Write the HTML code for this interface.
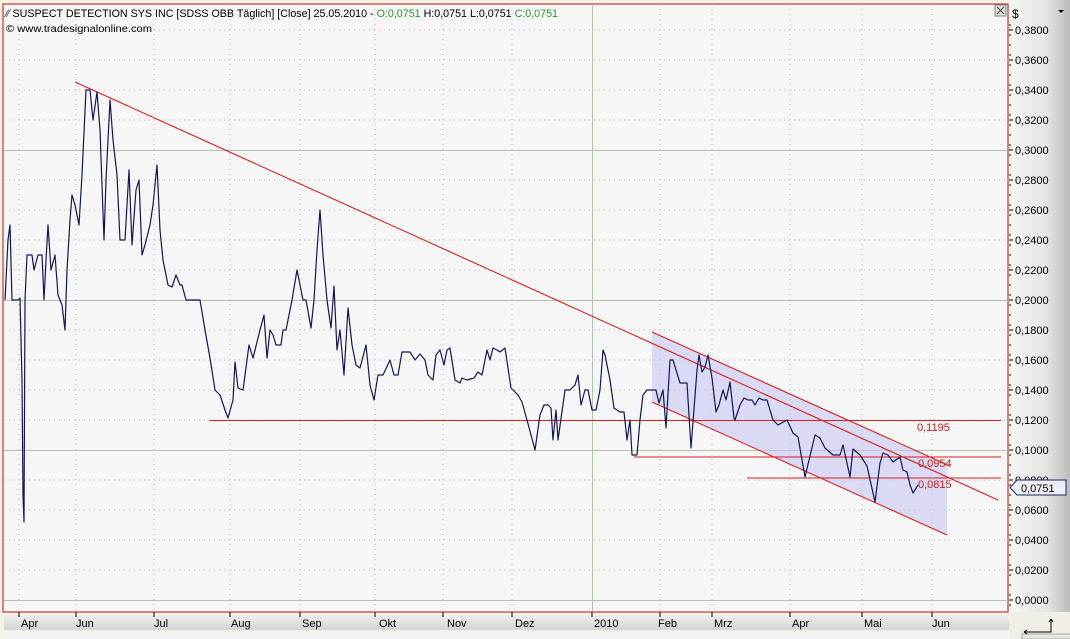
<!DOCTYPE html>
<html><head><meta charset="utf-8"><style>
html,body{margin:0;padding:0;background:#f4f1e6;}
svg{display:block;font-family:"Liberation Sans",sans-serif;}
</style></head><body>
<svg width="1070" height="639" viewBox="0 0 1070 639" xmlns="http://www.w3.org/2000/svg">
<defs>
<linearGradient id="ga" x1="0" x2="1" y1="0" y2="0"><stop offset="0" stop-color="#f6f6f4"/><stop offset="0.6" stop-color="#e6e6e4"/><stop offset="1" stop-color="#bcbcba"/></linearGradient>
<linearGradient id="gb" x1="0" x2="0" y1="0" y2="1"><stop offset="0" stop-color="#f4f4f2"/><stop offset="1" stop-color="#d4d4d2"/></linearGradient>
</defs>
<rect x="0" y="0" width="1070" height="639" fill="#f4f1e6"/>
<rect x="1009" y="0" width="61" height="612" fill="url(#ga)"/>
<rect x="4" y="612" width="1005" height="18" fill="url(#gb)"/>
<rect x="1009" y="612" width="61" height="27" fill="#f0eee6"/>
<rect x="3" y="4" width="1005" height="608" fill="#f6f6f6" stroke="#c0392b" stroke-width="1.2"/>
<g stroke="#b8b8b8" stroke-width="1" stroke-dasharray="1,4">
<line x1="4" x2="1008" y1="30" y2="30"/><line x1="4" x2="1008" y1="60" y2="60"/><line x1="4" x2="1008" y1="90" y2="90"/><line x1="4" x2="1008" y1="120" y2="120"/><line x1="4" x2="1008" y1="180" y2="180"/><line x1="4" x2="1008" y1="210" y2="210"/><line x1="4" x2="1008" y1="240" y2="240"/><line x1="4" x2="1008" y1="270" y2="270"/><line x1="4" x2="1008" y1="330" y2="330"/><line x1="4" x2="1008" y1="360" y2="360"/><line x1="4" x2="1008" y1="390" y2="390"/><line x1="4" x2="1008" y1="420" y2="420"/><line x1="4" x2="1008" y1="480" y2="480"/><line x1="4" x2="1008" y1="510" y2="510"/><line x1="4" x2="1008" y1="540" y2="540"/><line x1="4" x2="1008" y1="570" y2="570"/>
<line x1="19" x2="19" y1="4" y2="611"/><line x1="76" x2="76" y1="4" y2="611"/><line x1="154" x2="154" y1="4" y2="611"/><line x1="230" x2="230" y1="4" y2="611"/><line x1="300" x2="300" y1="4" y2="611"/><line x1="375" x2="375" y1="4" y2="611"/><line x1="443" x2="443" y1="4" y2="611"/><line x1="512" x2="512" y1="4" y2="611"/><line x1="660" x2="660" y1="4" y2="611"/><line x1="712" x2="712" y1="4" y2="611"/><line x1="790" x2="790" y1="4" y2="611"/><line x1="862" x2="862" y1="4" y2="611"/><line x1="932" x2="932" y1="4" y2="611"/>
</g>
<g stroke="#b4c0b4" stroke-width="1">
<line x1="4" x2="1008" y1="150.5" y2="150.5"/><line x1="4" x2="1008" y1="300.5" y2="300.5"/><line x1="4" x2="1008" y1="450.5" y2="450.5"/><line x1="4" x2="1008" y1="600.5" y2="600.5"/><line x1="592.5" x2="592.5" y1="4" y2="611"/>
</g>
<polygon points="652,332 947,465 947,535 652,402" fill="#c8c8f4" fill-opacity="0.6"/>
<g stroke="#d42020" stroke-width="1.1" fill="none">
<line x1="75" y1="82" x2="998" y2="500"/>
<line x1="652" y1="332" x2="950" y2="466"/>
<line x1="652" y1="402" x2="947" y2="535"/>
<line x1="210" y1="420.5" x2="1001" y2="420.5"/>
<line x1="634" y1="457" x2="1001" y2="457"/>
<line x1="747" y1="478" x2="1001" y2="478"/>
</g>
<polyline fill="none" stroke="#141850" stroke-width="1.2" stroke-linejoin="round" points="5,300 8,240 10,225 12,300 18,300 20,298 22,380 23,495 24,522 25,300 27,255 32,255 34,270 38,255 42,255 44,300 46,260 48,225 51,270 55,255 58,295 62,305 65,330 67,270 70,220 72,195 75,205 79,225 82,175 86,90 90,90 93,120 97,92 100,130 104,240 106,180 110,100 113,140 117,175 120,240 125,240 129,170 132,245 136,190 139,180 142,255 145,245 150,225 153,205 157,165 160,230 163,260 168,285 172,287 176,275 180,285 182,285 186,300 190,300 193,300 200,300 205,330 210,358 215,390 220,395 225,410 228,418 233,400 235,362 238,388 243,390 249,345 253,358 260,330 264,315 267,358 270,330 273,335 276,345 281,345 283,330 286,330 292,300 297,270 300,285 303,300 306,300 311,328 314,300 317,250 320,210 323,255 327,300 331,328 334,286 337,350 340,330 344,375 348,308 352,345 356,365 360,368 366,345 370,385 374,400 378,375 383,375 390,360 394,375 398,375 402,352 410,352 415,360 420,354 425,360 428,375 433,380 436,355 440,350 444,365 447,350 450,348 455,380 460,383 462,378 467,380 474,378 478,372 482,375 487,350 490,360 493,348 497,350 500,352 505,348 511,388 518,395 522,402 527,420 535,450 540,415 544,405 548,405 551,408 553,440 556,410 558,440 565,390 570,390 575,385 578,375 581,405 585,390 588,390 592,410 596,410 600,390 603,350 605,355 610,380 614,408 620,412 624,412 627,440 630,420 632,455 637,455 640,420 643,395 647,390 656,390 659,403 663,390 666,428 670,360 673,360 680,383 687,383 691,448 697,370 699,355 702,372 705,367 708,355 712,378 716,412 719,405 723,390 726,400 730,382 734,418 735,420 740,405 744,398 748,400 752,400 755,405 759,398 763,400 767,400 773,420 778,425 787,420 793,433 798,437 805,477 815,435 820,438 825,448 833,455 840,455 843,445 850,477 853,449 860,455 867,466 875,502 880,463 883,453 888,455 893,462 900,457 903,470 907,472 910,485 913,493 918,485"/>
<g fill="#c02020" font-size="11">
<text x="917" y="431">0,1195</text><text x="918" y="467">0,0954</text><text x="918" y="488">0,0815</text>
</g>
<text x="6" y="17" font-size="11" fill="#000" textLength="552" lengthAdjust="spacingAndGlyphs"><tspan fill="#333">⁄∕</tspan> SUSPECT DETECTION SYS INC [SDSS OBB  Täglich] [Close] 25.05.2010 - <tspan fill="#2a9a2a">O:0,0751</tspan> H:0,0751 L:0,0751 <tspan fill="#2a9a2a">C:0,0751</tspan></text>
<text x="6" y="32" font-size="10" fill="#000" textLength="146" lengthAdjust="spacingAndGlyphs">© www.tradesignalonline.com</text>
<rect x="995" y="5" width="11" height="11" fill="#e0e0e0" stroke="#888"/>
<path d="M997,7 L1004,14 M1004,7 L997,14" stroke="#444" stroke-width="1"/>
<text x="1012" y="18" font-size="12" fill="#000">$</text>
<path d="M1058,10 L1064,10 L1061,13 Z" fill="#000"/>
<g stroke="#000" stroke-width="1">
<path d="M1009,30H1013M1009,60H1013M1009,90H1013M1009,120H1013M1009,150H1013M1009,180H1013M1009,210H1013M1009,240H1013M1009,270H1013M1009,300H1013M1009,330H1013M1009,360H1013M1009,390H1013M1009,420H1013M1009,450H1013M1009,480H1013M1009,510H1013M1009,540H1013M1009,570H1013M1009,600H1013"/>
<path d="M1009,25H1011M1009,35H1011M1009,45H1011M1009,55H1011M1009,65H1011M1009,75H1011M1009,85H1011M1009,95H1011M1009,105H1011M1009,115H1011M1009,125H1011M1009,135H1011M1009,145H1011M1009,155H1011M1009,165H1011M1009,175H1011M1009,185H1011M1009,195H1011M1009,205H1011M1009,215H1011M1009,225H1011M1009,235H1011M1009,245H1011M1009,255H1011M1009,265H1011M1009,275H1011M1009,285H1011M1009,295H1011M1009,305H1011M1009,315H1011M1009,325H1011M1009,335H1011M1009,345H1011M1009,355H1011M1009,365H1011M1009,375H1011M1009,385H1011M1009,395H1011M1009,405H1011M1009,415H1011M1009,425H1011M1009,435H1011M1009,445H1011M1009,455H1011M1009,465H1011M1009,475H1011M1009,485H1011M1009,495H1011M1009,505H1011M1009,515H1011M1009,525H1011M1009,535H1011M1009,545H1011M1009,555H1011M1009,565H1011M1009,575H1011M1009,585H1011M1009,595H1011M1009,605H1011"/>
</g>
<g font-size="11" fill="#000">
<text x="1015" y="34">0,3800</text><text x="1015" y="64">0,3600</text><text x="1015" y="94">0,3400</text><text x="1015" y="124">0,3200</text><text x="1015" y="154">0,3000</text><text x="1015" y="184">0,2800</text><text x="1015" y="214">0,2600</text><text x="1015" y="244">0,2400</text><text x="1015" y="274">0,2200</text><text x="1015" y="304">0,2000</text><text x="1015" y="334">0,1800</text><text x="1015" y="364">0,1600</text><text x="1015" y="394">0,1400</text><text x="1015" y="424">0,1200</text><text x="1015" y="454">0,1000</text><text x="1015" y="484">0,0800</text><text x="1015" y="514">0,0600</text><text x="1015" y="544">0,0400</text><text x="1015" y="574">0,0200</text><text x="1015" y="604">0,0000</text>
</g>
<path d="M1010,487.5 L1017,480 L1066,480 L1066,495 L1017,495 Z" fill="#eef0f8" stroke="#1a2060" stroke-width="1"/>
<text x="1021" y="492" font-size="11" fill="#000">0,0751</text>
<g stroke="#000" stroke-width="1">
<path d="M19,612V617M76,612V617M154,612V617M230,612V617M300,612V617M375,612V617M443,612V617M512,612V617M592,612V617M660,612V617M712,612V617M790,612V617M862,612V617M932,612V617"/>
</g>
<g font-size="11" fill="#000">
<text x="21" y="627">Apr</text><text x="76" y="627">Jun</text><text x="154" y="627">Jul</text><text x="231" y="627">Aug</text><text x="302" y="627">Sep</text><text x="379" y="627">Okt</text><text x="447" y="627">Nov</text><text x="515" y="627">Dez</text><text x="594" y="627">2010</text><text x="658" y="627">Feb</text><text x="714" y="627">Mrz</text><text x="792" y="627">Apr</text><text x="864" y="627">Mai</text><text x="932" y="627">Jun</text>
</g>
<rect x="4" y="632" width="1005" height="7" fill="#f4f4f2"/>
<rect x="1022" y="634" width="86" height="5" fill="#e6e6e4" stroke="#aaa"/>
<path d="M1024,632 L1051,632 L1051,619" fill="none" stroke="#000" stroke-width="1"/>
<path d="M1024,632 l3,-2 M1024,632 l3,2 M1051,619 l-2,3 M1051,619 l2,3" stroke="#000" stroke-width="1"/>
</svg>
</body></html>
